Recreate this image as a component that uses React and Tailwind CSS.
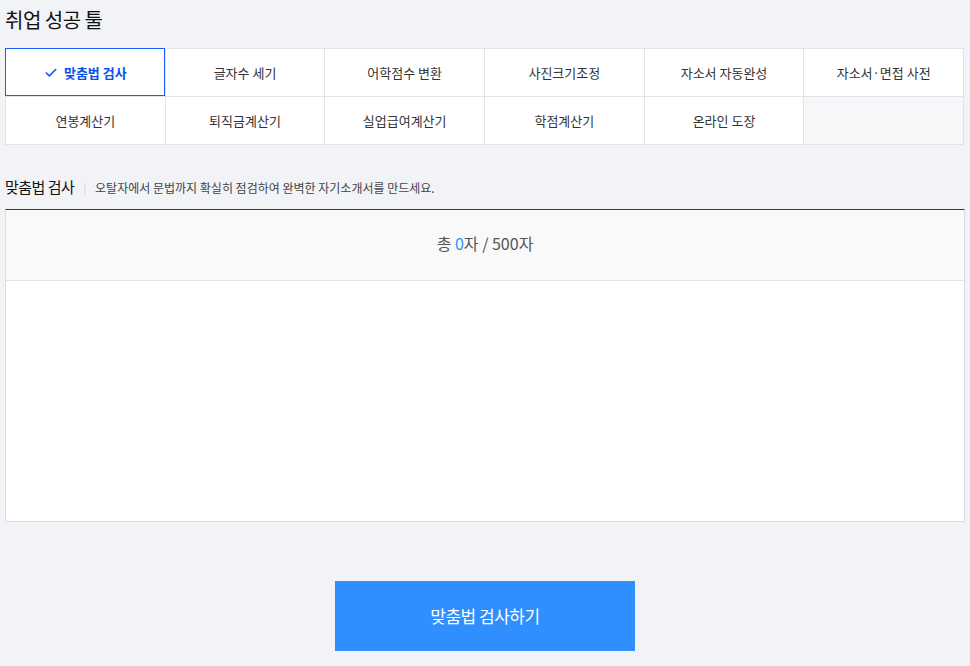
import { Check } from "lucide-react";

const TOOLS = [
  "맞춤법 검사",
  "글자수 세기",
  "어학점수 변환",
  "사진크기조정",
  "자소서 자동완성",
  "자소서·면접 사전",
  "연봉계산기",
  "퇴직금계산기",
  "실업급여계산기",
  "학점계산기",
  "온라인 도장",
];

export default function App() {
  const active = "맞춤법 검사";

  return (
    <div
      className="min-h-screen bg-[#f2f3f7] text-[#222]"
      style={{ fontFamily: '"Noto Sans CJK KR", "Noto Sans", sans-serif' }}
    >
      <div className="w-[960px] ml-[5px]">
        <div className="h-[48px] pt-[8px]">
          <h1 className="text-[20px] leading-[24px] font-normal text-[#111] tracking-[-0.5px]">
            취업 성공 툴
          </h1>
        </div>

        {/* tool grid */}
        <div className="grid grid-cols-6 border-l border-t border-[#e2e3e8] bg-[#f6f7f9] w-[959px]">
          {TOOLS.map((t) => (
            <button
              key={t}
              className={`relative h-[48px] flex items-center justify-center gap-1.5 text-[13px] border-r border-b border-[#e2e3e8] bg-white ${
                t === active ? "text-[#0a50f0] font-bold" : "text-[#333]"
              }`}
            >
              {t === active && (
                <span className="absolute -left-px -top-px right-0 bottom-0 border border-[#1a5cff]" />
              )}
              {t === active && <Check size={14} strokeWidth={3} className="text-[#1a5cff]" />}
              {t}
            </button>
          ))}
          <div className="h-[48px] border-r border-b border-[#e2e3e8]" />
        </div>

        {/* section heading */}
        <div className="h-[64px] flex items-end pb-[13px]">
          <h2 className="text-[15px] leading-[18px] font-normal text-[#111] tracking-[-0.5px]">
            맞춤법 검사
          </h2>
          <span className="mx-[9px] text-[10px] leading-[16px] text-[#ccc]">|</span>
          <p className="text-[12px] leading-[17px] text-[#444]">
            오탈자에서 문법까지 확실히 점검하여 완벽한 자기소개서를 만드세요.
          </p>
        </div>

        {/* editor box */}
        <div className="border-t border-t-[#333a48] border-x border-b border-[#dcdde2] bg-white">
          <div className="h-[71px] flex items-center justify-center pb-[5px] bg-[#f9f9f9] border-b border-[#e2e3e6] text-[16px] text-[#555]">
            총&nbsp;<span className="text-[#2f8fff]">0</span>자 / 500자
          </div>
          <textarea className="block w-full h-[240px] resize-none p-4 text-[14px] outline-none bg-white" />
        </div>

        <div className="flex justify-center pt-[59px]">
          <button className="w-[300px] h-[70px] bg-[#2f8fff] text-white text-[17px] tracking-[-0.5px]">
            맞춤법 검사하기
          </button>
        </div>
      </div>
    </div>
  );
}
